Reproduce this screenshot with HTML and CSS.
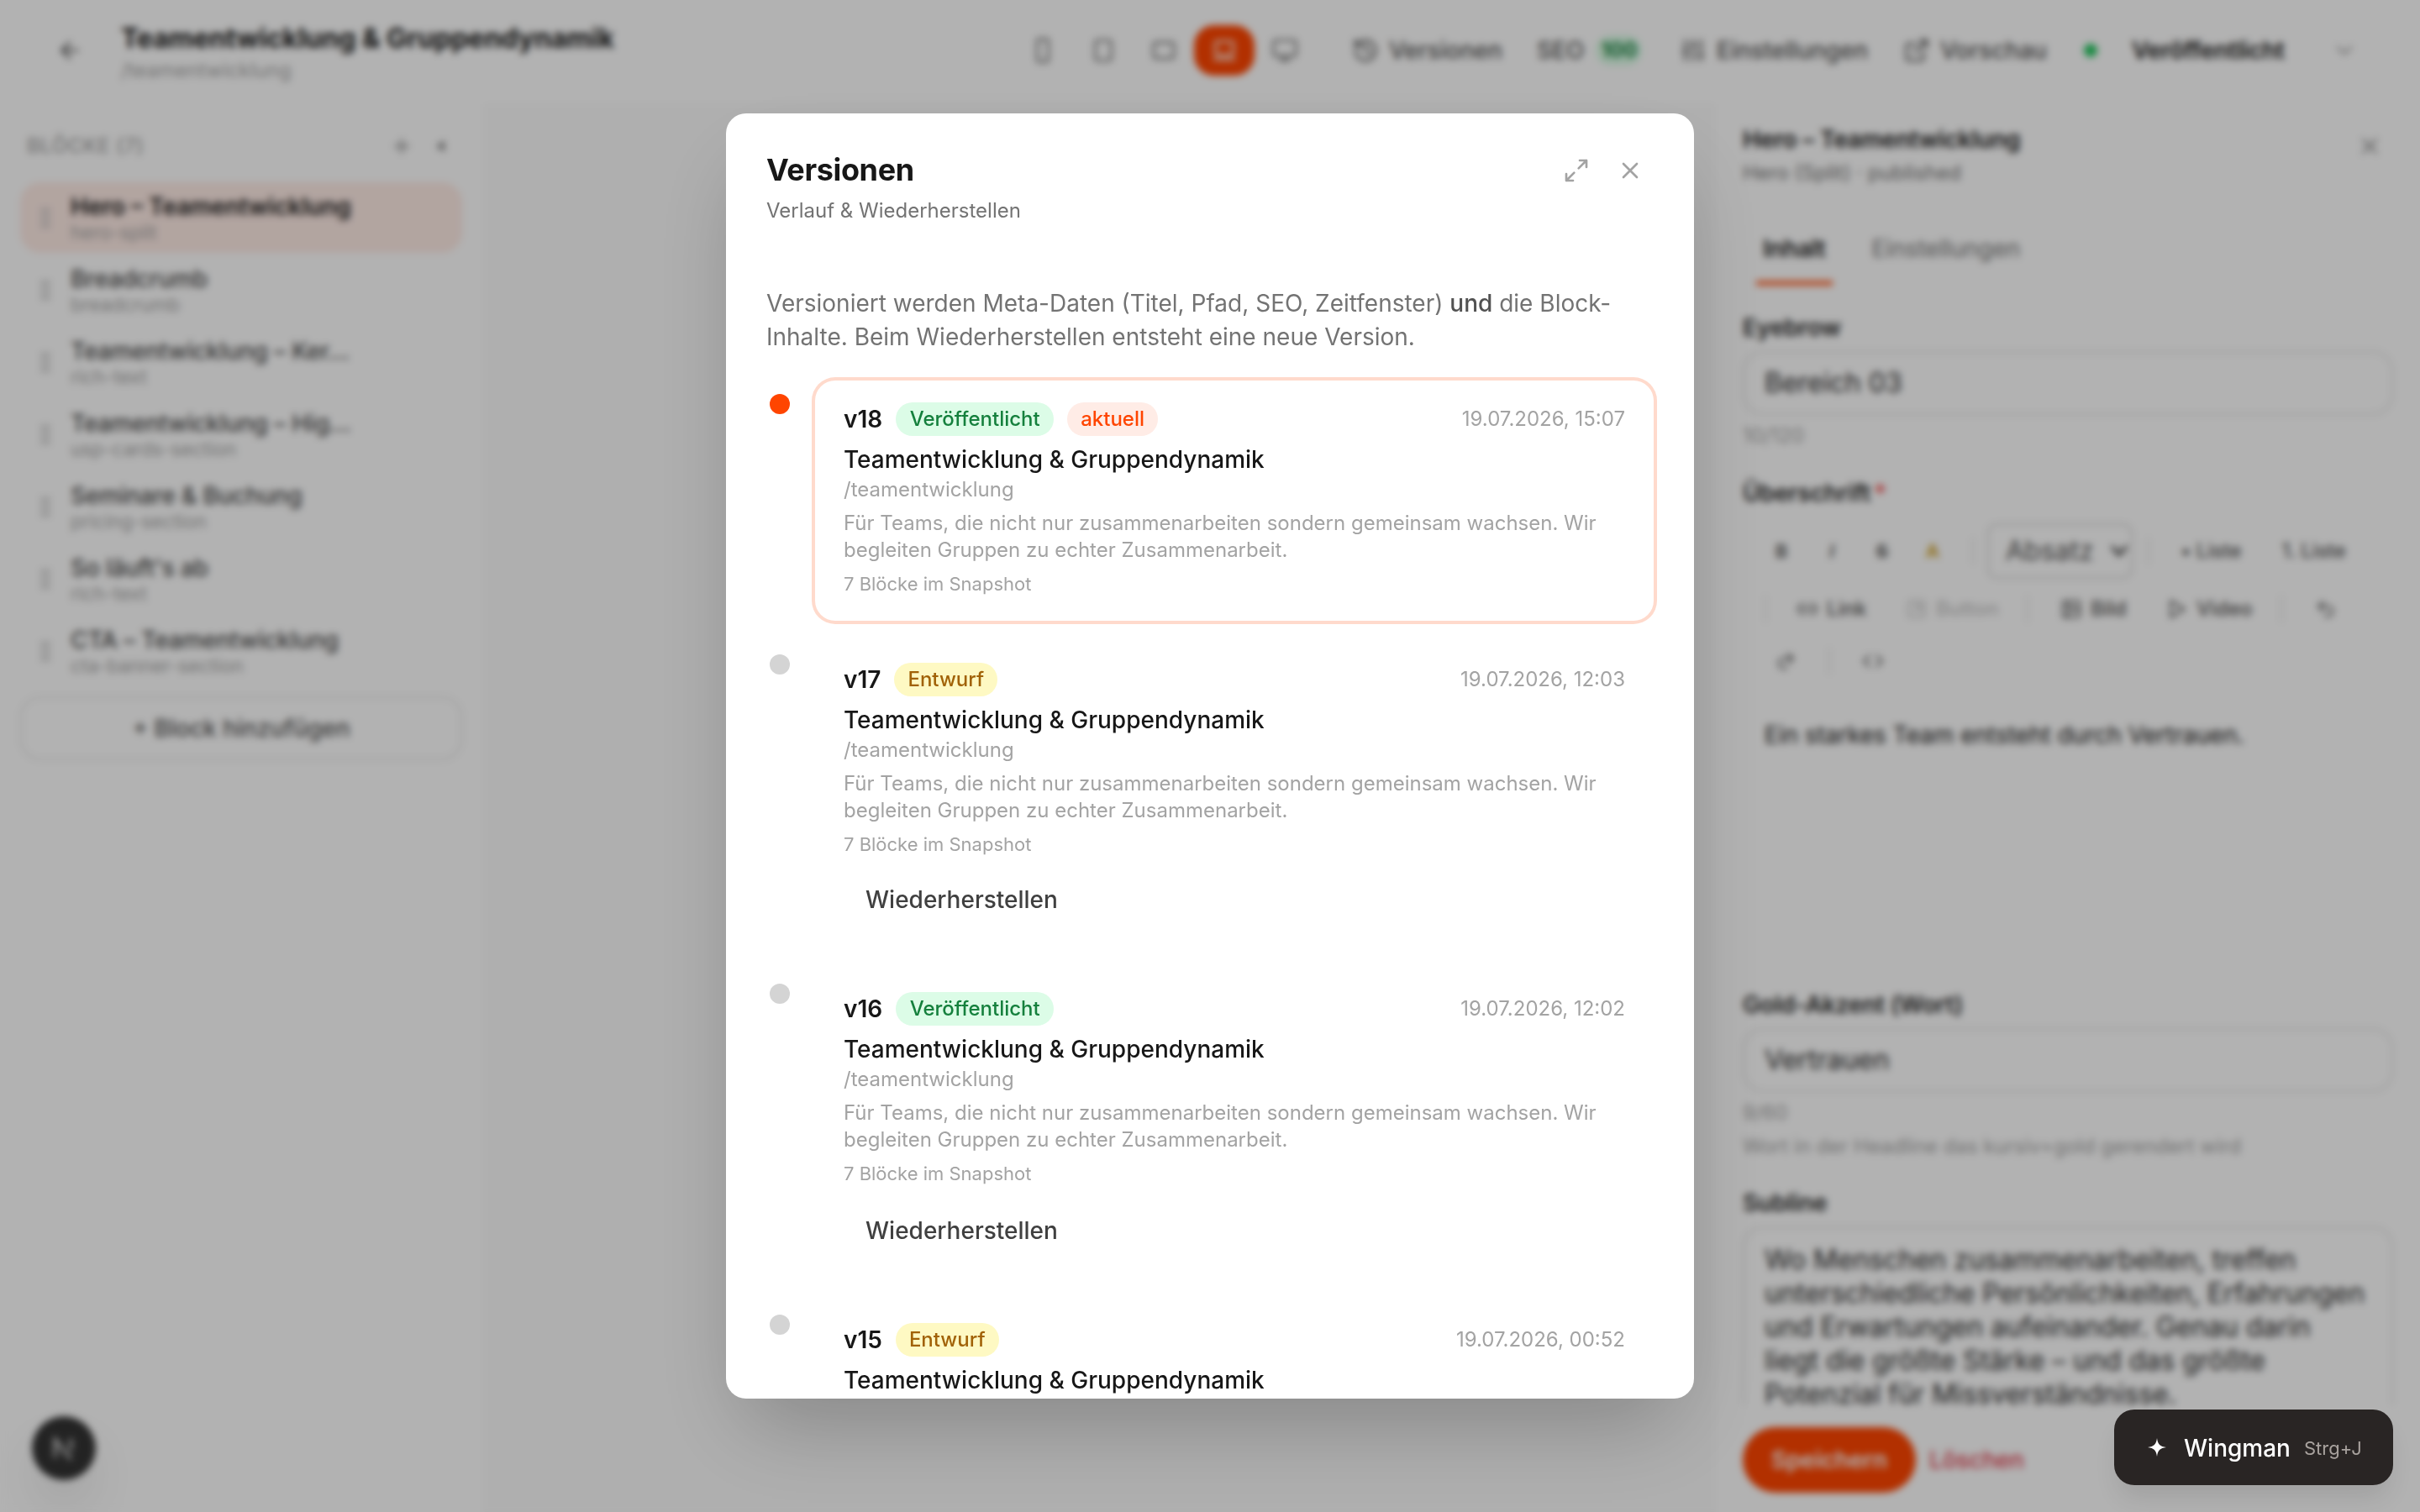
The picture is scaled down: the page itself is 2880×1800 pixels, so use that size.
FILE: index.html
```html
<!DOCTYPE html>
<html lang="de">
<head>
  <meta charset="UTF-8">
  <meta name="viewport" content="width=device-width, initial-scale=1.0">
  <title>Teamentwicklung &amp; Gruppendynamik – Versionen</title>
  <link rel="stylesheet" href="styles.css">
</head>
<body>
  <div class="app">
    <header class="topbar">
      <svg class="icon back" viewBox="0 0 24 24"><path d="M19 12H5M12 19l-7-7 7-7"/></svg>
      <div class="page-info">
        <h1>Teamentwicklung &amp; Gruppendynamik</h1>
        <p>/teamentwicklung</p>
      </div>
      <div class="viewports">
        <button><svg class="icon" viewBox="0 0 24 24"><rect x="7" y="2" width="10" height="20" rx="2"/></svg></button>
        <button><svg class="icon" viewBox="0 0 24 24"><rect x="5" y="3" width="14" height="18" rx="2"/></svg></button>
        <button><svg class="icon" viewBox="0 0 24 24"><rect x="3" y="5" width="18" height="14" rx="2"/></svg></button>
        <button class="active"><svg class="icon" viewBox="0 0 24 24"><rect x="4" y="4" width="16" height="12" rx="2"/><path d="M3 20h18"/></svg></button>
        <button><svg class="icon" viewBox="0 0 24 24"><rect x="2" y="3" width="20" height="14" rx="2"/><path d="M8 21h8M12 17v4"/></svg></button>
      </div>
      <nav class="actions">
        <a class="act-versions"><svg class="icon" viewBox="0 0 24 24"><path d="M3 12a9 9 0 1 0 3-6.7L3 8M3 3v5h5M12 7v5l4 2"/></svg>Versionen</a>
        <a class="act-seo">SEO<span class="score">100</span></a>
        <a class="act-settings"><svg class="icon" viewBox="0 0 24 24"><path d="M5 3v8M5 15v6M3 13h4M12 3v4M12 11v10M10 8h4M19 3v10M19 17v4M17 16h4"/></svg>Einstellungen</a>
        <a class="act-preview"><svg class="icon" viewBox="0 0 24 24"><path d="M18 13v6a2 2 0 0 1-2 2H5a2 2 0 0 1-2-2V8a2 2 0 0 1 2-2h6M15 3h6v6M10 14L21 3"/></svg>Vorschau</a>
      </nav>
      <div class="status">
        <span class="status-dot"></span>
        <strong>Veröffentlicht</strong>
        <svg class="icon" viewBox="0 0 24 24"><path d="M6 9l6 6 6-6"/></svg>
      </div>
    </header>

    <main class="workspace">
      <aside class="sidebar">
        <div class="sidebar-head">
          <span>BLÖCKE (7)</span>
          <svg class="icon" viewBox="0 0 24 24"><path d="M12 5v14M5 12h14"/></svg>
          <svg class="collapse" viewBox="0 0 12 16"><path d="M11 1v14L1 8z"/></svg>
        </div>
        <ul class="blocks">
          <li class="selected"><i class="grip"></i><div><b>Hero – Teamentwicklung</b><small>hero-split</small></div></li>
          <li><i class="grip"></i><div><b>Breadcrumb</b><small>breadcrumb</small></div></li>
          <li><i class="grip"></i><div><b>Teamentwicklung – Ker…</b><small>rich-text</small></div></li>
          <li><i class="grip"></i><div><b>Teamentwicklung – Hig…</b><small>usp-cards-section</small></div></li>
          <li><i class="grip"></i><div><b>Seminare &amp; Buchung</b><small>pricing-section</small></div></li>
          <li><i class="grip"></i><div><b>So läuft's ab</b><small>rich-text</small></div></li>
          <li><i class="grip"></i><div><b>CTA – Teamentwicklung</b><small>cta-banner-section</small></div></li>
        </ul>
        <button class="add-block">+ Block hinzufügen</button>
      </aside>

      <section class="canvas"></section>

      <aside class="inspector">
        <div class="inspector-head">
          <div>
            <h2>Hero – Teamentwicklung</h2>
            <p>Hero (Split) · published</p>
          </div>
          <svg class="icon" viewBox="0 0 24 24"><path d="M6 6l12 12M18 6L6 18"/></svg>
        </div>
        <div class="tabs">
          <span class="tab tab-active">Inhalt</span>
          <span class="tab">Einstellungen</span>
        </div>
        <div class="fields">
          <label>Eyebrow</label>
          <div class="input">Bereich 03</div>
          <p class="help">10/120</p>

          <label class="label-editor">Überschrift<em>*</em></label>
          <div class="toolbar">
            <div class="tool-row tool-row-text">
              <b>B</b><i>I</i><s>S</s><b class="gold">A</b>
              <span class="sep"></span>
              <span class="select">Absatz<svg class="icon" viewBox="0 0 24 24"><path d="M5 8l7 8 7-8"/></svg></span>
              <span class="sep"></span>
              <span class="list-ul">• Liste</span>
              <span class="list-ol">1. Liste</span>
            </div>
            <div class="tool-row tool-row-media">
              <span class="sep"></span>
              <span class="tool tool-link"><svg class="icon" viewBox="0 0 24 24"><path d="M9 17H7A5 5 0 0 1 7 7h2M15 7h2a5 5 0 0 1 0 10h-2M8 12h8"/></svg>Link</span>
              <span class="tool tool-button"><svg class="icon" viewBox="0 0 24 24"><rect x="3" y="3" width="18" height="18" rx="3"/><path d="M10 14l6-6M16 14V8h-6"/></svg>Button</span>
              <span class="sep"></span>
              <span class="tool tool-image"><svg class="icon" viewBox="0 0 24 24"><rect x="3" y="3" width="18" height="18" rx="2"/><circle cx="9" cy="9" r="2"/><path d="M21 15l-5-5L5 21"/></svg>Bild</span>
              <span class="tool tool-video"><svg class="icon" viewBox="0 0 24 24"><path d="M5 3l15 9-15 9z"/></svg>Video</span>
              <span class="sep"></span>
              <svg class="icon undo" viewBox="0 0 24 24"><path d="M9 14L4 9l5-5M4 9h10a5.500 5.500 0 0 1 0 11h-3"/></svg>
            </div>
            <div class="tool-row tool-row-history">
              <svg class="icon" viewBox="0 0 24 24"><path d="M15 14l5-5-5-5M20 9H10a5.500 5.500 0 0 0 0 11h3"/></svg>
              <span class="sep"></span>
              <svg class="icon" viewBox="0 0 24 24"><path d="M8 6l-6 6 6 6M16 6l6 6-6 6"/></svg>
            </div>
          </div>
          <div class="editor">Ein starkes Team entsteht durch Vertrauen.</div>

          <label>Gold-Akzent (Wort)</label>
          <div class="input">Vertrauen</div>
          <p class="help">9/60</p>
          <p class="help help-hint">Wort in der Headline das kursiv+gold gerendert wird</p>

          <label class="label-subline">Subline</label>
          <div class="textarea">Wo Menschen zusammenarbeiten, treffen<br>unterschiedliche Persönlichkeiten, Erfahrungen<br>und Erwartungen aufeinander. Genau darin<br>liegt die größte Stärke – und das größte<br>Potenzial für Missverständnisse.</div>
        </div>
        <footer class="inspector-foot">
          <button class="save">Speichern</button>
          <button class="delete">Löschen</button>
        </footer>
      </aside>
    </main>
    <div class="dev-badge"><svg viewBox="0 0 32 32"><path d="M5 28V5l20 25M25 4v15"/></svg></div>
  </div>

  <div class="overlay">
    <div class="modal" role="dialog">
      <div class="modal-head">
        <div>
          <h2>Versionen</h2>
          <p>Verlauf &amp; Wiederherstellen</p>
        </div>
        <svg class="icon expand" viewBox="0 0 24 24"><path d="M15 3h6v6M9 21H3v-6M21 3l-7 7M3 21l7-7"/></svg>
        <svg class="icon close" viewBox="0 0 24 24"><path d="M6 6l12 12M18 6L6 18"/></svg>
      </div>
      <p class="intro">Versioniert werden Meta-Daten (Titel, Pfad, SEO, Zeitfenster) <strong>und</strong> die Block-Inhalte. Beim Wiederherstellen entsteht eine neue Version.</p>

      <ol class="timeline">
        <li class="entry current">
          <span class="dot"></span>
          <article class="card">
            <div class="card-head"><strong>v18</strong><span class="badge published">Veröffentlicht</span><span class="badge latest">aktuell</span><time>19.07.2026, 15:07</time></div>
            <h3>Teamentwicklung &amp; Gruppendynamik</h3>
            <p class="path">/teamentwicklung</p>
            <p class="desc">Für Teams, die nicht nur zusammenarbeiten sondern gemeinsam wachsen. Wir begleiten Gruppen zu echter Zusammenarbeit.</p>
            <p class="count">7 Blöcke im Snapshot</p>
          </article>
        </li>
        <li class="entry">
          <span class="dot"></span>
          <article class="card">
            <div class="card-head"><strong>v17</strong><span class="badge draft">Entwurf</span><time>19.07.2026, 12:03</time></div>
            <h3>Teamentwicklung &amp; Gruppendynamik</h3>
            <p class="path">/teamentwicklung</p>
            <p class="desc">Für Teams, die nicht nur zusammenarbeiten sondern gemeinsam wachsen. Wir begleiten Gruppen zu echter Zusammenarbeit.</p>
            <p class="count">7 Blöcke im Snapshot</p>
            <button class="restore">Wiederherstellen</button>
          </article>
        </li>
        <li class="entry">
          <span class="dot"></span>
          <article class="card">
            <div class="card-head"><strong>v16</strong><span class="badge published">Veröffentlicht</span><time>19.07.2026, 12:02</time></div>
            <h3>Teamentwicklung &amp; Gruppendynamik</h3>
            <p class="path">/teamentwicklung</p>
            <p class="desc">Für Teams, die nicht nur zusammenarbeiten sondern gemeinsam wachsen. Wir begleiten Gruppen zu echter Zusammenarbeit.</p>
            <p class="count">7 Blöcke im Snapshot</p>
            <button class="restore">Wiederherstellen</button>
          </article>
        </li>
        <li class="entry">
          <span class="dot"></span>
          <article class="card">
            <div class="card-head"><strong>v15</strong><span class="badge draft">Entwurf</span><time>19.07.2026, 00:52</time></div>
            <h3>Teamentwicklung &amp; Gruppendynamik</h3>
          </article>
        </li>
      </ol>
    </div>
  </div>

  <button class="wingman">
    <svg viewBox="0 0 24 24"><path d="M12 0c1 8 4 11 12 12-8 1-11 4-12 12-1-8-4-11-12-12 8-1 11-4 12-12z"/></svg>
    <span>Wingman</span>
    <kbd>Strg+J</kbd>
  </button>
</body>
</html>
```
FILE: styles.css
```css
* {
  margin: 0;
  padding: 0;
  box-sizing: border-box;
}

body {
  width: 2880px;
  height: 1800px;
  overflow: hidden;
  background: #fff;
  color: #171717;
  font-family: Inter, "Liberation Sans", sans-serif;
  font-size: 28px;
  line-height: 40px;
}

button {
  border: none;
  background: none;
  font: inherit;
  color: inherit;
}

ul, ol {
  list-style: none;
}

.icon {
  flex: none;
  width: 32px;
  height: 32px;
  fill: none;
  stroke: currentColor;
  stroke-width: 2;
  stroke-linecap: round;
  stroke-linejoin: round;
}

.app {
  display: flex;
  flex-direction: column;
  height: 1800px;
}

/* Kopfzeile */
.topbar {
  display: flex;
  align-items: center;
  height: 124px;
  padding: 0 74px 4px 67px;
  color: #525252;
}

.page-info {
  width: 1061px;
  margin: 7px 0 0 45px;
}

.page-info h1 {
  font-size: 32px;
  font-weight: 700;
  line-height: 40px;
  color: #171717;
}

.page-info p {
  font-size: 24px;
  line-height: 36px;
  color: #a3a3a3;
}

.viewports {
  display: flex;
  color: #737373;
}

.viewports button {
  display: flex;
  align-items: center;
  justify-content: center;
  width: 72px;
  height: 60px;
  border-radius: 24px;
}

.viewports .active {
  background: #ff4500;
  color: #fff;
}

.actions {
  display: flex;
  margin-left: 44px;
  font-weight: 500;
}

.actions a {
  display: flex;
  align-items: center;
  gap: 12px;
}

.act-versions { width: 220px; }
.act-seo { width: 170px; }
.act-settings { width: 266px; }
.act-preview { width: 215px; }

.score {
  margin-left: 2px;
  padding: 0 6px;
  border-radius: 18px;
  background: #dcfce7;
  color: #15803d;
  font-size: 24px;
  font-weight: 700;
  line-height: 36px;
}

.status {
  display: flex;
  flex: 1;
  align-items: center;
  color: #a3a3a3;
}

.status-dot {
  width: 16px;
  height: 16px;
  margin-right: 41px;
  border-radius: 50%;
  background: #22c55e;
}

.status strong {
  margin-right: auto;
  font-weight: 600;
  letter-spacing: -0.2px;
  color: #171717;
}

.workspace {
  display: flex;
  flex: 1;
  min-height: 0;
}

/* Blockliste */
.sidebar {
  width: 576px;
  padding: 28px 26px 0 24px;
}

.sidebar-head {
  display: flex;
  align-items: center;
  height: 44px;
  padding: 0 20px 0 8px;
  color: #a3a3a3;
  font-size: 24px;
  font-weight: 500;
  letter-spacing: 0.6px;
}

.sidebar-head span {
  flex: 1;
}

.sidebar-head .icon {
  width: 28px;
  height: 28px;
  color: #8a8a8a;
}

.collapse {
  width: 12px;
  height: 16px;
  margin-left: 26px;
  fill: #8a8a8a;
}

.blocks {
  display: flex;
  flex-direction: column;
  gap: 2px;
  margin-top: 21px;
}

.blocks li {
  display: flex;
  align-items: center;
  gap: 24px;
  height: 84px;
  padding-left: 24px;
  border-radius: 24px;
}

.blocks .selected {
  background: #ffece6;
}

.grip {
  width: 12px;
  height: 26px;
  background: radial-gradient(circle, #b8b8b8 2px, transparent 3px) 0 0 / 6px 9px;
}

.blocks b {
  display: block;
  font-weight: 500;
  line-height: 34px;
  letter-spacing: -0.15px;
  color: #484848;
}

.blocks .selected b {
  font-weight: 600;
  letter-spacing: 0;
  color: #171717;
}

.blocks small {
  display: block;
  font-size: 22.600px;
  line-height: 27px;
  color: #a3a3a3;
}

.add-block {
  width: 526px;
  height: 76px;
  margin-top: 12px;
  border: 2px solid #e5e5e5;
  border-radius: 24px;
  font-weight: 500;
  color: #525252;
}

.canvas {
  flex: 1;
  background: #fbfbfb;
}

/* Eigenschaften */
.inspector {
  display: flex;
  flex-direction: column;
  width: 840px;
  border-left: 2px solid #fdfdfd;
}

.inspector-head {
  display: flex;
  justify-content: space-between;
  padding: 22px 44px 0 32px;
  color: #737373;
}

.inspector-head h2 {
  font-size: 28px;
  font-weight: 600;
  line-height: 41px;
  letter-spacing: -0.15px;
  color: #171717;
}

.inspector-head p {
  font-size: 24px;
  line-height: 38px;
}

.inspector-head .icon {
  margin-top: 12px;
  color: #939393;
}

.tabs {
  display: flex;
  gap: 39px;
  margin-top: 49px;
  padding-left: 48px;
}

.tab {
  height: 66px;
  padding: 0 8px;
  line-height: 45px;
  color: #737373;
}

.tab-active {
  border-bottom: 6px solid #ff6a33;
  font-weight: 600;
  letter-spacing: -0.2px;
  color: #171717;
}

.fields {
  flex: 1;
  min-height: 0;
  padding: 32px 32px 0;
  overflow: hidden;
}

.fields label {
  display: block;
  font-weight: 600;
  line-height: 36px;
  letter-spacing: -0.1px;
  color: #262626;
}

.fields label em {
  margin-left: 4px;
  font-style: normal;
  color: #ef4444;
}

.fields .label-editor { margin-top: 35px; }
.fields .label-subline { margin-top: 34px; }

.input {
  height: 76px;
  margin-top: 10px;
  padding: 0 24px;
  border: 2px solid #e0e0e0;
  border-radius: 24px;
  font-size: 32px;
  line-height: 72px;
  color: #262626;
}

.help {
  margin-top: 10px;
  font-size: 24px;
  line-height: 30px;
  color: #a3a3a3;
}

.help-hint { margin-top: 10px; }

.toolbar {
  margin-top: 18px;
  color: #525252;
  font-size: 24px;
  font-weight: 500;
}

.tool-row {
  display: flex;
  align-items: center;
}

.tool-row .icon {
  width: 26px;
  height: 26px;
}

.sep {
  width: 2px;
  height: 32px;
  background: #e5e5e5;
}

.tool-row-text {
  height: 66px;
  padding-left: 16px;
}

.tool-row-text b,
.tool-row-text i,
.tool-row-text s {
  width: 60px;
  font-size: 22px;
  font-weight: 600;
  text-align: center;
}

.tool-row-text .gold {
  margin-right: 17px;
  color: #c9960c;
}

.select {
  display: flex;
  align-items: center;
  justify-content: space-between;
  width: 173px;
  height: 66px;
  margin: 0 18px 0 16px;
  padding: 0 1px 0 20px;
  border: 2px solid #d4d4d4;
  border-radius: 12px;
  font-size: 32px;
  font-weight: 400;
}

.select .icon {
  stroke-width: 4;
}

.list-ul,
.list-ol {
  letter-spacing: -0.2px;
}

.list-ul { margin-left: 37px; }
.list-ol { margin-left: 48px; }

.tool-row-media {
  height: 72px;
  padding-left: 26px;
}

.tool {
  display: flex;
  align-items: center;
  gap: 10px;
}

.tool-link { width: 130px; margin-left: 36px; }
.tool-button { width: 110px; margin-right: 34px; color: #c4c4c4; }
.tool-image { width: 126px; margin-left: 38px; }
.tool-video { width: 101px; margin-right: 35px; }
.undo { margin-left: 39px; }

.tool-row-history {
  gap: 38px;
  height: 52px;
  padding-left: 38px;
}

.editor {
  height: 323px;
  margin-top: 42px;
  padding-left: 26px;
  font-size: 28px;
  line-height: 40px;
}

.textarea {
  height: 260px;
  margin-top: 10px;
  padding: 18px 24px;
  border: 2px solid #e0e0e0;
  border-radius: 24px;
  font-size: 32px;
  line-height: 40px;
  white-space: nowrap;
  color: #262626;
}

.inspector-foot {
  display: flex;
  gap: 16px;
  height: 128px;
  padding: 27px 32px 0;
}

.save {
  width: 206px;
  height: 78px;
  border-radius: 39px;
  background: #ff4500;
  color: #fff;
  font-weight: 600;
}

.delete {
  height: 78px;
  font-weight: 500;
  letter-spacing: -0.2px;
  color: #e0404f;
}

.dev-badge {
  position: absolute;
  left: 38px;
  top: 1686px;
  display: flex;
  align-items: center;
  justify-content: center;
  width: 76px;
  height: 76px;
  border-radius: 50%;
  background: #333;
  box-shadow: 0 32px 64px -16px rgba(0, 0, 0, 0.24);
}

.dev-badge svg {
  width: 30px;
  height: 30px;
  fill: none;
  stroke: #ccc;
  stroke-width: 4;
}

/* Versionen-Dialog */
.overlay {
  position: fixed;
  inset: 0;
  display: flex;
  align-items: center;
  justify-content: center;
  background: rgba(0, 0, 0, 0.3);
  backdrop-filter: blur(4px);
}

.modal {
  width: 1152px;
  height: 1530px;
  padding: 47px 48px 0;
  border-radius: 24px;
  background: #fff;
  box-shadow: 0 50px 100px -24px rgba(0, 0, 0, 0.25);
  overflow: hidden;
}

.modal-head {
  display: flex;
  align-items: flex-start;
  color: #a3a3a3;
}

.modal-head div {
  flex: 1;
}

.modal-head h2 {
  font-size: 36px;
  font-weight: 700;
  line-height: 40px;
  letter-spacing: -0.36px;
  color: #171717;
}

.modal-head p {
  margin-top: 13px;
  font-size: 24px;
  line-height: 32px;
  color: #737373;
}

.expand {
  margin: 5px 32px 0 0;
}

.close {
  margin: 5px 12px 0 0;
}

.intro {
  margin-top: 74px;
  color: #737373;
}

.intro strong {
  font-weight: 500;
  color: #525252;
}

.timeline {
  display: flex;
  flex-direction: column;
  gap: 24px;
  margin-top: 32px;
}

.entry {
  display: flex;
  gap: 30px;
}

.dot {
  flex: none;
  width: 24px;
  height: 24px;
  margin: 16px 0 0 4px;
  border-radius: 50%;
  background: #d4d4d4;
}

.current .dot {
  background: #ff4500;
}

.card {
  flex: 1;
  padding: 26px 34px 30px;
  border-radius: 24px;
}

.current .card {
  padding-bottom: 29px;
  box-shadow: 0 0 0 4px #ffdacc;
}

.card-head {
  display: flex;
  align-items: center;
  gap: 16px;
  height: 40px;
}

.card-head strong {
  font-weight: 600;
}

.card-head time {
  margin-left: auto;
  font-size: 24px;
  color: #a3a3a3;
}

.badge {
  padding: 0 16px;
  border-radius: 20px;
  font-size: 24px;
  font-weight: 500;
  line-height: 40px;
}

.published {
  padding: 0 16.500px;
  background: #dcfce7;
  color: #15803d;
}

.draft {
  background: #fef9c3;
  color: #a16207;
}

.latest {
  background: #ffece6;
  color: #ff4500;
}

.card h3 {
  margin-top: 8px;
  font-size: 28px;
  font-weight: 500;
}

.path,
.desc {
  font-size: 24px;
  line-height: 32px;
  color: #a3a3a3;
}

.desc {
  margin-top: 8px;
}

.count {
  margin-top: 9px;
  font-size: 22px;
  line-height: 30px;
  color: #a3a3a3;
}

.restore {
  display: block;
  height: 61px;
  margin-top: 20px;
  padding: 0 26px;
  font-weight: 500;
  color: #404040;
}

.entry:nth-child(3) .restore {
  margin-top: 22px;
}

/* Assistent */
.wingman {
  position: fixed;
  right: 32px;
  bottom: 32px;
  display: flex;
  align-items: center;
  width: 332px;
  height: 90px;
  padding: 1px 0 0 40px;
  border-radius: 24px;
  background: #292524;
  color: #fff;
  font-weight: 500;
  box-shadow: 0 20px 30px -6px rgba(0, 0, 0, 0.1);
}

.wingman svg {
  width: 22px;
  height: 22px;
  margin: -2px 21px 0 0;
  fill: #fff;
}

.wingman kbd {
  margin-left: 16px;
  font-family: inherit;
  font-size: 22px;
  font-weight: 400;
  color: #a8a29e;
}
```
